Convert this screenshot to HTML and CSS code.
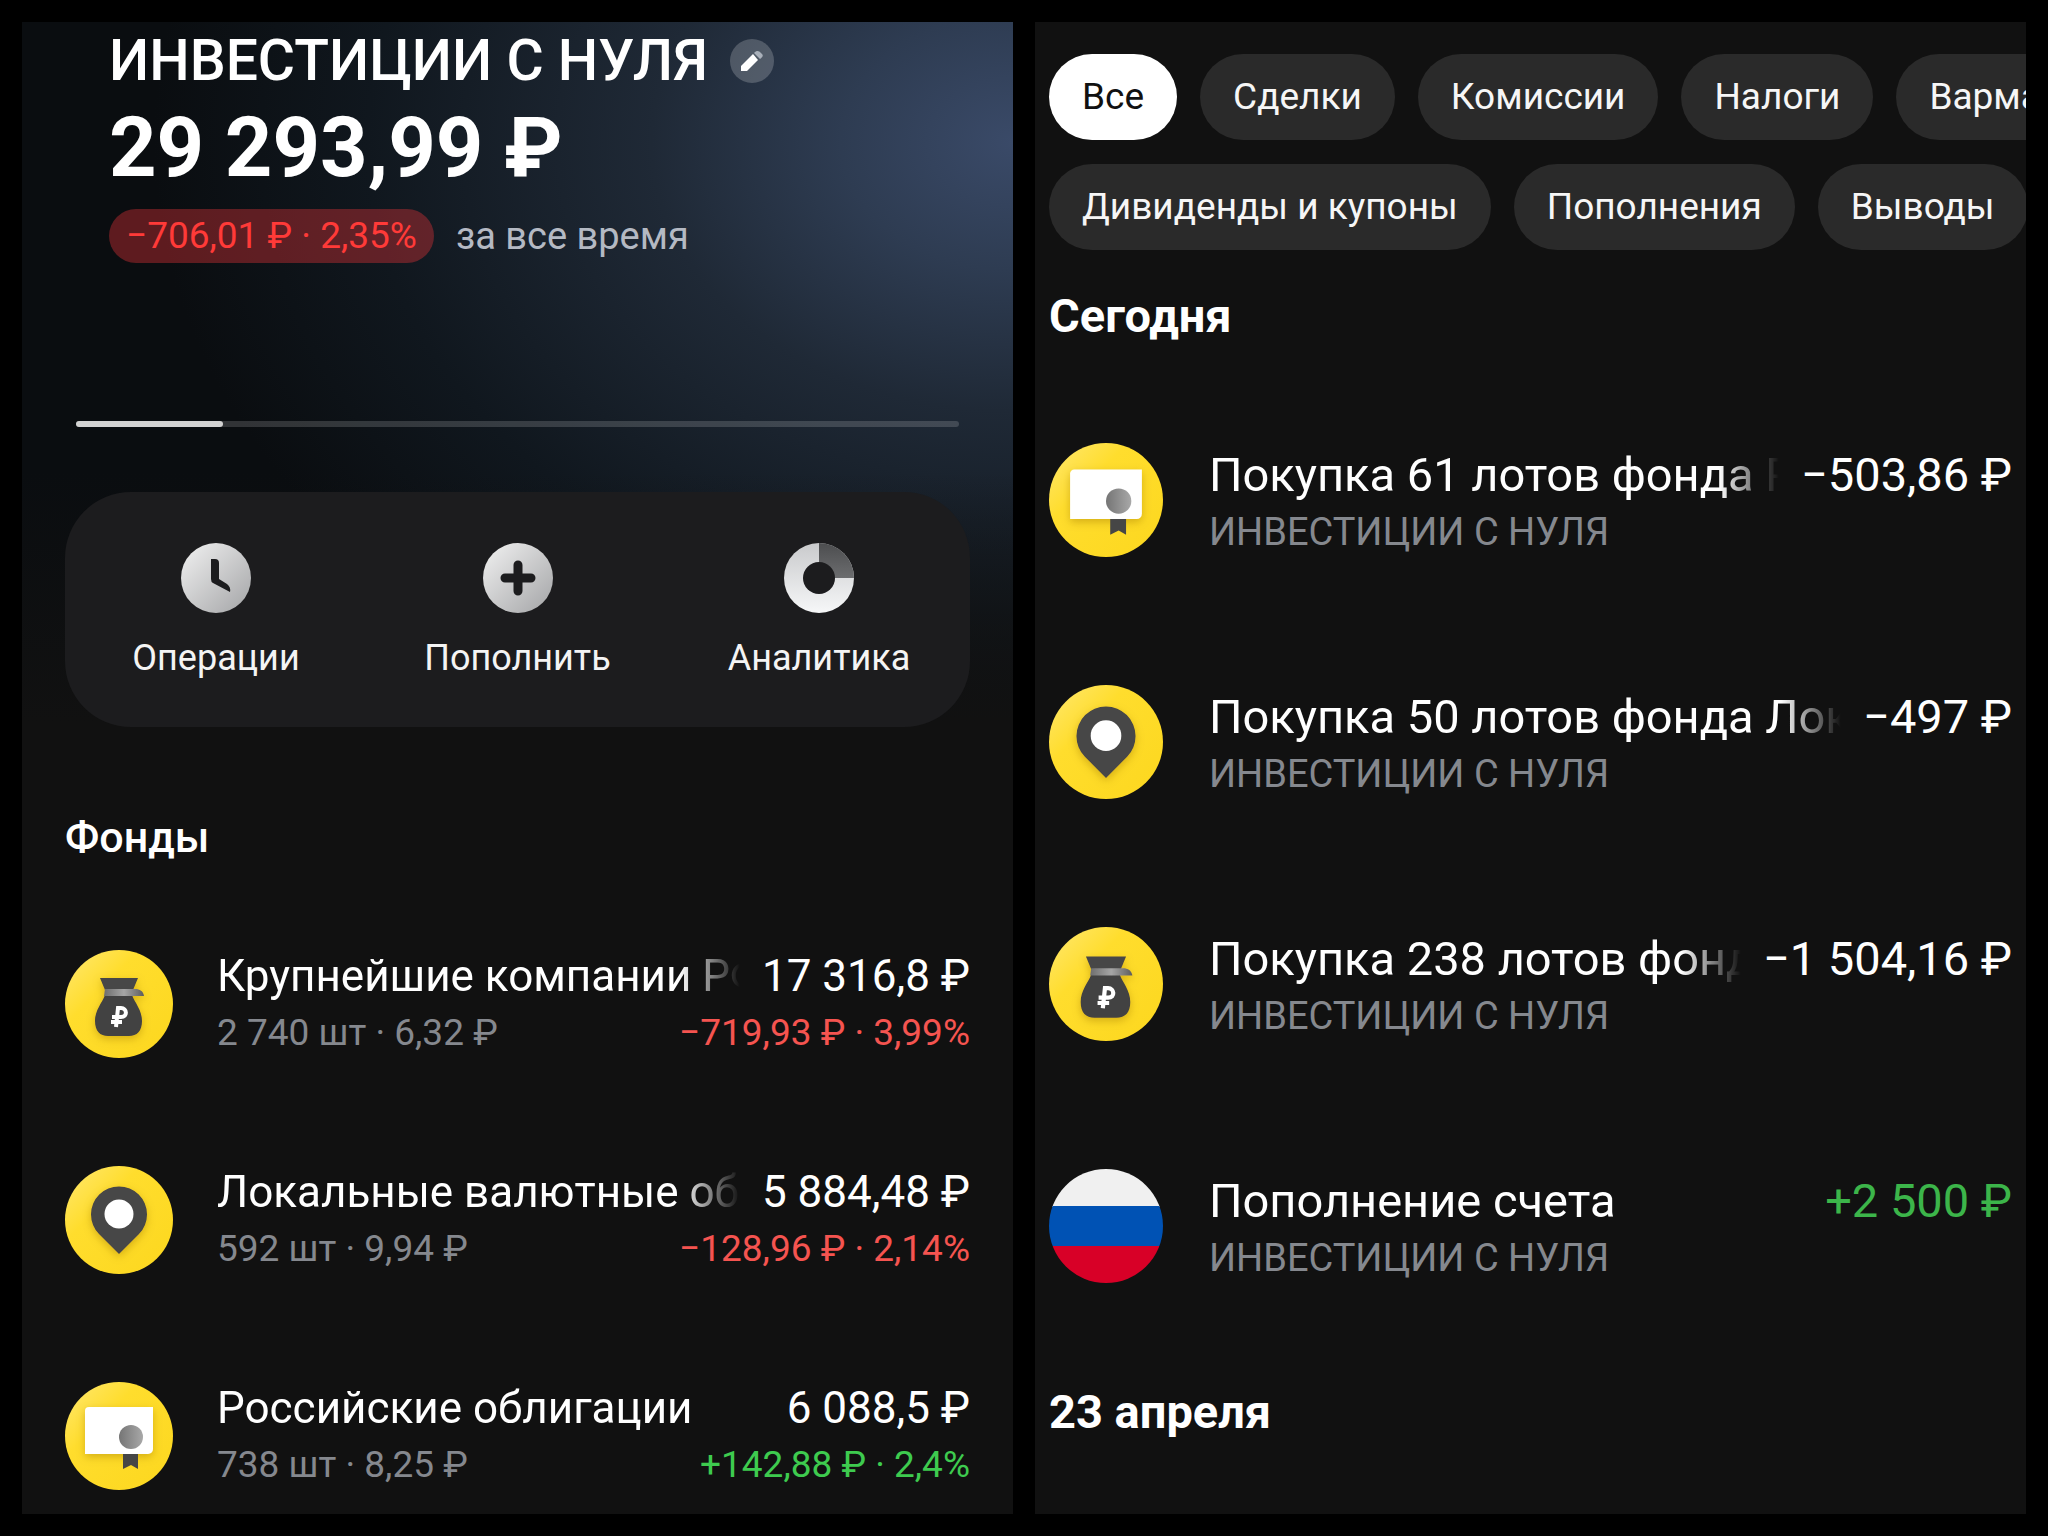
FILE: index.html
```html
<!DOCTYPE html>
<html lang="ru">
<head>
  <meta charset="UTF-8">
  <title>Инвестиции с нуля</title>
  <link rel="stylesheet" href="styles.css">
</head>
<body>
  <!-- Градиенты и иконки фондов -->
  <svg class="sprite" aria-hidden="true">
    <defs>
      <linearGradient id="yellow" x1="0" y1="0" x2="1" y2="1">
        <stop offset="0" stop-color="#ffe873"/>
        <stop offset="0.35" stop-color="#ffdd2d"/>
        <stop offset="1" stop-color="#fcd71e"/>
      </linearGradient>
      <linearGradient id="silver" x1="0" y1="0" x2="1" y2="1">
        <stop offset="0" stop-color="#f2f2f2"/>
        <stop offset="1" stop-color="#a3a4a6"/>
      </linearGradient>
      <linearGradient id="seal" x1="0" y1="0" x2="1" y2="0">
        <stop offset="0" stop-color="#757575"/>
        <stop offset="1" stop-color="#a8a8a8"/>
      </linearGradient>
      <linearGradient id="tie" x1="0" y1="0" x2="1" y2="0">
        <stop offset="0" stop-color="#6e6e6e"/>
        <stop offset="0.5" stop-color="#a6a6a6"/>
        <stop offset="1" stop-color="#5c5c5c"/>
      </linearGradient>
      <linearGradient id="ring" x1="0" y1="0" x2="0" y2="1">
        <stop offset="0" stop-color="#c9cacc"/>
        <stop offset="1" stop-color="#f6f7f8"/>
      </linearGradient>
      <linearGradient id="sector" x1="0" y1="0" x2="0" y2="1">
        <stop offset="0" stop-color="#4c4d4f"/>
        <stop offset="1" stop-color="#6c6d6f"/>
      </linearGradient>
      <filter id="shade" x="-30%" y="-30%" width="160%" height="160%">
        <feDropShadow dx="0" dy="3" stdDeviation="4" flood-color="#a07800" flood-opacity="0.45"/>
      </filter>
    </defs>
    <symbol id="bag" viewBox="0 0 108 108">
      <circle cx="54" cy="54" r="54" fill="url(#yellow)"/>
      <g filter="url(#shade)">
        <path d="M35 28h38l-5 12H40z" fill="#464646"/>
        <path d="M40 45h27c3 8 10 15 10 26 0 10-5 15-13 15H43c-8 0-13-5-13-15 0-11 7-18 10-26z" fill="#424242"/>
        <path d="M40 39h30c5 0 8 2 9 7H39z" fill="url(#tie)"/>
      </g>
      <path d="M51 77l2-19h3c6 0 7 9 0 9h-9M46 72h11" fill="none" stroke="#fff" stroke-width="4"/>
    </symbol>
    <symbol id="pin" viewBox="0 0 108 108">
      <circle cx="54" cy="54" r="54" fill="url(#yellow)"/>
      <path d="M54 88L34 68a28 28 0 1 1 40 0z" fill="#464646" filter="url(#shade)"/>
      <circle cx="54" cy="48" r="14.5" fill="#fff"/>
    </symbol>
    <symbol id="bond" viewBox="0 0 108 108">
      <circle cx="54" cy="54" r="54" fill="url(#yellow)"/>
      <path d="M24 25h64v42a5 5 0 0 1-5 5H20V29a4 4 0 0 1 4-4z" fill="#fff" filter="url(#shade)"/>
      <path d="M58 72h15v15l-7-4-8 4z" fill="#464646"/>
      <circle cx="66" cy="55" r="12" fill="url(#seal)"/>
    </symbol>
    <symbol id="flag" viewBox="0 0 108 108">
      <clipPath id="round"><circle cx="54" cy="54" r="54"/></clipPath>
      <g clip-path="url(#round)">
        <path d="M0 0h108v36H0z" fill="#f0f0f0"/>
        <path d="M0 35h108v38H0z" fill="#0052b4"/>
        <path d="M0 73h108v35H0z" fill="#d80027"/>
      </g>
    </symbol>
  </svg>

  <main class="screens">
    <section class="screen portfolio">
      <header class="account">
        <div class="account-name">
          <h1>ИНВЕСТИЦИИ С НУЛЯ</h1>
          <button class="edit" aria-label="Изменить название">
            <svg viewBox="0 0 44 44"><path d="M11 32v-5l12-12 5 6-11 11z" fill="#fff"/><path d="M24 14c3-3 5-2 7 0s3 3-1 6z" fill="#a9b0ba"/></svg>
          </button>
        </div>
        <p class="total">29 293,99 ₽</p>
        <p class="change"><span class="badge">−706,01 ₽ · 2,35%</span> за все время</p>
      </header>

      <div class="progress"><div class="progress-bar"></div></div>

      <nav class="actions">
        <button class="action">
          <svg viewBox="0 0 70 70"><circle cx="35" cy="35" r="35" fill="url(#silver)"/><path d="M30 16h4q4 0 4 4v16l8 5q4 3 3 8l-17-9q-2-1-2-4z" fill="#1c1c1e"/></svg>
          Операции
        </button>
        <button class="action">
          <svg viewBox="0 0 70 70"><circle cx="35" cy="35" r="35" fill="url(#silver)"/><path d="M35 22v26M22 35h26" stroke="#1c1c1e" stroke-width="9" stroke-linecap="round"/></svg>
          Пополнить
        </button>
        <button class="action">
          <svg viewBox="0 0 70 70"><circle cx="35" cy="35" r="35" fill="url(#ring)"/><path d="M35 0a35 35 0 0 1 35 35H35z" fill="url(#sector)"/><circle cx="35" cy="35" r="16" fill="#1c1c1e"/></svg>
          Аналитика
        </button>
      </nav>

      <h2 class="funds-title">Фонды</h2>
      <ul class="list funds">
        <li class="row">
          <svg class="icon"><use href="#bag"/></svg>
          <div class="info">
            <div class="line"><span class="name">Крупнейшие компании РФ</span><span class="sum">17 316,8 ₽</span></div>
            <div class="line small"><span>2 740 шт · 6,32 ₽</span><span class="minus">−719,93 ₽ · 3,99%</span></div>
          </div>
        </li>
        <li class="row">
          <svg class="icon"><use href="#pin"/></svg>
          <div class="info">
            <div class="line"><span class="name">Локальные валютные облигации</span><span class="sum">5 884,48 ₽</span></div>
            <div class="line small"><span>592 шт · 9,94 ₽</span><span class="minus">−128,96 ₽ · 2,14%</span></div>
          </div>
        </li>
        <li class="row">
          <svg class="icon"><use href="#bond"/></svg>
          <div class="info">
            <div class="line"><span class="name">Российские облигации</span><span class="sum">6 088,5 ₽</span></div>
            <div class="line small"><span>738 шт · 8,25 ₽</span><span class="plus">+142,88 ₽ · 2,4%</span></div>
          </div>
        </li>
      </ul>
    </section>

    <section class="screen history">
      <div class="filters">
        <div class="filter-row">
          <button class="chip active">Все</button>
          <button class="chip">Сделки</button>
          <button class="chip">Комиссии</button>
          <button class="chip">Налоги</button>
          <button class="chip">Вармаржа</button>
        </div>
        <div class="filter-row">
          <button class="chip">Дивиденды и купоны</button>
          <button class="chip">Пополнения</button>
          <button class="chip">Выводы</button>
        </div>
      </div>

      <h2 class="day">Сегодня</h2>
      <ul class="list operations">
        <li class="row">
          <svg class="icon"><use href="#bond"/></svg>
          <div class="info">
            <div class="line"><span class="name">Покупка 61 лотов фонда Российские облигации</span><span class="sum">−503,86 ₽</span></div>
            <div class="line small"><span>ИНВЕСТИЦИИ С НУЛЯ</span></div>
          </div>
        </li>
        <li class="row">
          <svg class="icon"><use href="#pin"/></svg>
          <div class="info">
            <div class="line"><span class="name">Покупка 50 лотов фонда Локальные валютные облигации</span><span class="sum">−497 ₽</span></div>
            <div class="line small"><span>ИНВЕСТИЦИИ С НУЛЯ</span></div>
          </div>
        </li>
        <li class="row">
          <svg class="icon"><use href="#bag"/></svg>
          <div class="info">
            <div class="line"><span class="name">Покупка 238 лотов фонда Крупнейшие компании РФ</span><span class="sum">−1 504,16 ₽</span></div>
            <div class="line small"><span>ИНВЕСТИЦИИ С НУЛЯ</span></div>
          </div>
        </li>
        <li class="row">
          <svg class="icon"><use href="#flag"/></svg>
          <div class="info">
            <div class="line"><span class="name">Пополнение счета</span><span class="sum income">+2 500 ₽</span></div>
            <div class="line small"><span>ИНВЕСТИЦИИ С НУЛЯ</span></div>
          </div>
        </li>
      </ul>
      <h2 class="day">23 апреля</h2>
    </section>
  </main>
</body>
</html>
```
FILE: styles.css
```css
* {
  box-sizing: border-box;
}

body {
  margin: 0;
  background-color: #000;
  color: #fff;
  font-family: Roboto, sans-serif;
}

h1, h2, p, ul {
  margin: 0;
  padding: 0;
}

button {
  border: none;
  font-family: inherit;
  cursor: pointer;
}

.sprite {
  position: absolute;
  width: 0;
  height: 0;
}

.screens {
  display: grid;
  grid-template-columns: minmax(0, 1fr) minmax(0, 1fr);
  gap: 22px;
  padding: 22px;
  min-height: 100vh;
}

.screen {
  overflow: hidden;
  background-color: #111;
}

/* Портфель */
.portfolio {
  padding: 9px 43px 0;
  background-image:
    linear-gradient(to bottom, rgba(17, 17, 17, 0) 450px, #111 700px),
    radial-gradient(ellipse 860px 640px at 100% 120px, #3a4a68 0%, #2e3c52 20%, #1f2936 42%, #10171e 75%, #0a0d10 100%);
  background-repeat: no-repeat;
}

.account {
  padding-left: 44px;
}

.account-name {
  display: flex;
  align-items: center;
  gap: 22px;
}

h1 {
  font-size: 57px;
  font-weight: 500;
  line-height: 60px;
}

.edit {
  width: 44px;
  height: 44px;
  padding: 0;
  border-radius: 50%;
  background-color: rgba(255, 255, 255, 0.2);
}

.edit svg {
  display: block;
}

.total {
  font-size: 83px;
  font-weight: 700;
  line-height: 114px;
}

.change {
  display: flex;
  align-items: center;
  gap: 22px;
  margin-top: 4px;
  font-size: 38px;
  color: #b4b9c3;
}

.badge {
  padding: 0 17px;
  border-radius: 27px;
  font-size: 37px;
  line-height: 54px;
  background-color: rgba(220, 50, 55, 0.4);
  color: #ff3a38;
}

.progress {
  height: 6px;
  margin: 158px 11px 65px;
  border-radius: 3px;
  background-color: rgba(255, 255, 255, 0.16);
}

.progress-bar {
  width: 16.7%;
  height: 100%;
  border-radius: 3px;
  background-color: #d2d2d2;
}

.actions {
  display: flex;
  justify-content: space-between;
  padding: 51px 53px 46px;
  border-radius: 66px;
  background-color: #1c1c1e;
}

.action {
  display: flex;
  flex-direction: column;
  align-items: center;
  gap: 22px;
  min-width: 196px;
  padding: 0;
  background: none;
  color: #f4f4f4;
  font-size: 36px;
  line-height: 46px;
}

.action svg {
  width: 70px;
  height: 70px;
}

.funds-title {
  margin-top: 84px;
  font-size: 43px;
  font-weight: 500;
  line-height: 52px;
}

/* Списки */
.list {
  display: grid;
  grid-template-columns: minmax(0, 1fr);
  list-style: none;
}

.row {
  display: flex;
  align-items: center;
  gap: 44px;
}

.icon {
  flex: none;
  width: 108px;
  height: 108px;
}

.info {
  flex: 1;
  min-width: 0;
}

.line {
  display: flex;
  justify-content: space-between;
  gap: 22px;
  font-size: 44px;
  line-height: 58px;
  white-space: nowrap;
}

/* Длинное название плавно гаснет перед суммой */
.name {
  flex: 1;
  min-width: 0;
  overflow: hidden;
  -webkit-mask-image: linear-gradient(to left, transparent, #000 60px);
  mask-image: linear-gradient(to left, transparent, #000 60px);
}

.line.small {
  font-size: 37px;
  line-height: 56px;
  color: #85888e;
}

.line .minus {
  color: #f55450;
}

.line .plus {
  color: #3ecb4f;
}

.line .income {
  color: #3cb54a;
}

.funds {
  gap: 102px;
  margin-top: 84px;
}

/* История операций */
.history {
  padding: 32px 14px 0;
}

.filters {
  display: grid;
  gap: 24px;
}

.filter-row {
  display: flex;
  gap: 23px;
}

.chip {
  flex: none;
  padding: 0 33px;
  border-radius: 43px;
  background-color: #2a2a2a;
  color: #f6f6f6;
  font-size: 37px;
  line-height: 86px;
}

.chip.active {
  background-color: #fff;
  color: #111;
}

.day {
  margin-top: 38px;
  font-size: 47px;
  font-weight: 700;
  line-height: 56px;
}

.operations {
  gap: 122px;
  margin: 96px 0 98px;
}

.operations .row {
  gap: 46px;
}

.operations .icon {
  width: 114px;
  height: 114px;
}

.operations .info {
  padding-top: 6px;
}

.operations .line {
  font-size: 47px;
}

.operations .line.small {
  font-size: 38px;
}
```
